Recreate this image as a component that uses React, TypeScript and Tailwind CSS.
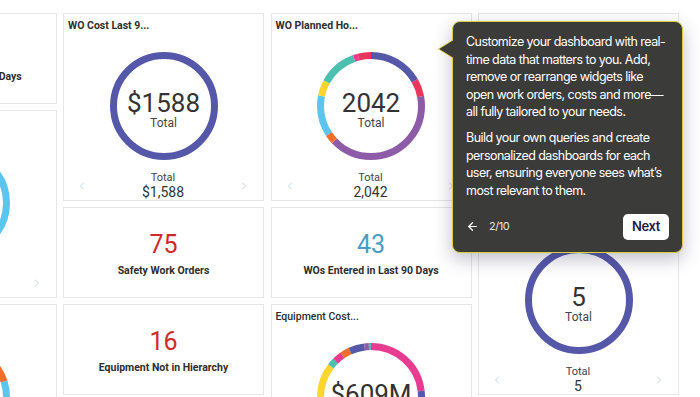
import { ArrowLeft, ChevronLeft, ChevronRight } from "lucide-react";

type Seg = { color: string; from: number; to: number };

const INDIGO = "#5558a8";
const LBLUE = "#5bc4ef";
const PURPLE = "#8e5ba8";
const RED = "#e8365d";
const PINK = "#e73c8f";
const TEAL = "#4dbfb0";
const YELLOW = "#fdd52e";
const ORANGE = "#f36d2b";

// ring drawn with one dashed circle per segment, 0deg = 12 o'clock
function Ring({ segs }: { segs: Seg[] }) {
	const size = 108;
	const stroke = 7;
	const r = (size - stroke) / 2;
	const c = 2 * Math.PI * r;
	return (
		<svg width={size} height={size} viewBox={`0 0 ${size} ${size}`}>
			<g transform={`rotate(-90 ${size / 2} ${size / 2})`}>
				{segs.map((s, i) => (
					<circle
						key={i}
						cx={size / 2}
						cy={size / 2}
						r={r}
						fill="none"
						stroke={s.color}
						strokeWidth={stroke}
						strokeDasharray={`${((s.to - s.from) / 360) * c} ${c}`}
						strokeDashoffset={(-s.from / 360) * c}
					/>
				))}
			</g>
		</svg>
	);
}

interface DonutCardProps {
	title: string;
	value: string;
	total: string;
	segs: Seg[];
	className: string;
	titleClass?: string;
}

function DonutCard({ title, value, total, segs, className, titleClass = "font-bold" }: DonutCardProps) {
	return (
		<div className={`${className} flex flex-col border border-[#e6e6e6] bg-white`}>
			<div className={`px-[4px] pt-[5px] text-[10.5px] leading-[14px] text-[#2e2e2e] ${titleClass}`}>{title}</div>
			<div className="relative mx-auto mt-[19px] h-[108px] w-[108px] shrink-0">
				<Ring segs={segs} />
				<div className="absolute inset-0 flex flex-col items-center pt-[37px]">
					<span className="text-[26px] leading-[28px] text-[#333]">{value}</span>
					<span className="-mt-[1px] text-[12px] leading-[14px] text-[#444]">Total</span>
				</div>
			</div>
			<div className="mt-[12px] flex items-center justify-between pl-[12px] pr-[13px]">
				<ChevronLeft className="h-[12px] w-[12px] text-[#b3c0e4]" strokeWidth={1.5} />
				<div className="flex flex-col items-center">
					<span className="text-[11px] leading-[12px] text-[#444]">Total</span>
					<span className="text-[14px] leading-[16px] text-[#333]">{total}</span>
				</div>
				<ChevronRight className="h-[12px] w-[12px] text-[#b3c0e4]" strokeWidth={1.5} />
			</div>
		</div>
	);
}

function NumberCard({ value, label, valueClass, className }: { value: string; label: string; valueClass: string; className: string }) {
	return (
		<div className={`${className} flex flex-col items-center border border-[#e6e6e6] bg-white pt-[23px]`}>
			<span className={`text-[25px] leading-[28px] ${valueClass}`}>{value}</span>
			<span className="mt-[5px] text-[10.5px] leading-[14px] font-bold text-[#2e2e2e]">{label}</span>
		</div>
	);
}

const plannedSegs: Seg[] = [
	{ color: INDIGO, from: 0, to: 60 },
	{ color: RED, from: 60, to: 79 },
	{ color: PURPLE, from: 79, to: 226 },
	{ color: ORANGE, from: 226, to: 236 },
	{ color: LBLUE, from: 236, to: 281 },
	{ color: YELLOW, from: 281, to: 298 },
	{ color: TEAL, from: 298, to: 340 },
	{ color: PINK, from: 340, to: 345 },
	{ color: RED, from: 345, to: 360 },
];

const equipSegs: Seg[] = [
	{ color: PINK, from: 0, to: 83 },
	{ color: INDIGO, from: 83, to: 130 },
	{ color: PURPLE, from: 130, to: 230 },
	{ color: YELLOW, from: 230, to: 307 },
	{ color: TEAL, from: 307, to: 315 },
	{ color: PINK, from: 315, to: 325 },
	{ color: ORANGE, from: 325, to: 335 },
	{ color: INDIGO, from: 335, to: 352 },
	{ color: PURPLE, from: 352, to: 357 },
	{ color: TEAL, from: 357, to: 360 },
];

export default function App() {
	return (
		<div className="relative h-[397px] w-[700px] overflow-hidden bg-white font-[Roboto]">
			<div className="-ml-[144.5px] grid grid-cols-[repeat(4,201px)] auto-rows-[90.5px] gap-[6.5px] pt-[13px]">
				{/* column 0, mostly scrolled out */}
				<NumberCard
					className="col-start-1 row-start-1"
					value="12"
					label="WOs Closed in Last 90 Days"
					valueClass="text-[#4a9cc6]"
				/>
				<DonutCard
					className="col-start-1 row-start-2 row-span-2"
					title="Open WOs by Type"
					value="18"
					total="18"
					segs={[{ color: LBLUE, from: 0, to: 360 }]}
				/>
				<DonutCard
					className="col-start-1 row-start-4 row-span-2"
					title="WOs by Status"
					value="96"
					total="96"
					segs={[
						{ color: INDIGO, from: 0, to: 50 },
						{ color: ORANGE, from: 50, to: 72 },
						{ color: LBLUE, from: 72, to: 360 },
					]}
				/>

				{/* column 1 */}
				<DonutCard
					className="col-start-2 row-start-1 row-span-2"
					title="WO Cost Last 9..."
					value="$1588"
					total="$1,588"
					segs={[{ color: INDIGO, from: 0, to: 360 }]}
				/>
				<NumberCard className="col-start-2 row-start-3" value="75" label="Safety Work Orders" valueClass="text-[#cf2a2a]" />
				<NumberCard className="col-start-2 row-start-4" value="16" label="Equipment Not in Hierarchy" valueClass="text-[#cf2a2a]" />

				{/* column 2 */}
				<DonutCard
					className="col-start-3 row-start-1 row-span-2"
					title="WO Planned Ho..."
					value="2042"
					total="2,042"
					segs={plannedSegs}
				/>
				<NumberCard className="col-start-3 row-start-3" value="43" label="WOs Entered in Last 90 Days" valueClass="text-[#4a9cc6]" />
				<DonutCard
					className="col-start-3 row-start-4 row-span-2"
					title="Equipment Cost..."
					titleClass="font-medium"
					value="$609M"
					total="$609M"
					segs={equipSegs}
				/>

				{/* column 3 */}
				<DonutCard
					className="col-start-4 row-start-1 row-span-2"
					title="Open WOs"
					value="31"
					total="31"
					segs={[{ color: INDIGO, from: 0, to: 360 }]}
				/>
				<DonutCard
					className="col-start-4 row-start-3 row-span-2"
					title="Overdue PMs"
					value="5"
					total="5"
					segs={[{ color: INDIGO, from: 0, to: 360 }]}
				/>
			</div>

			{/* onboarding tour popover */}
			<div className="absolute left-[452px] top-[21px] w-[231px] rounded-[8px] border border-[#d9cf3a] bg-[#3b3b39] px-[13px] pb-[12px] pt-[11px] font-[Inter] text-white shadow-[0_6px_18px_rgba(40,40,80,0.3)]">
				<svg className="absolute -left-[16px] top-[17px]" width="16" height="20" viewBox="0 0 16 20">
					<path d="M16 1 L1.5 10 L16 19" fill="#3b3b39" stroke="#d9cf3a" strokeWidth="1" />
				</svg>
				<p className="text-[12.5px] leading-[17.5px] tracking-[-0.55px]">
					Customize your dashboard with real-time data that matters to you. Add, remove or rearrange widgets like open work orders, costs and more—all fully tailored to your needs.
				</p>
				<p className="mt-[8.5px] text-[12.5px] leading-[17.5px] tracking-[-0.55px]">
					Build your own queries and create personalized dashboards for each user, ensuring everyone sees what’s most relevant to them.
				</p>
				<div className="mt-[14.5px] flex items-center">
					<ArrowLeft className="h-[13px] w-[13px]" strokeWidth={2.2} />
					<span className="ml-[10px] text-[11px] tracking-[-0.5px] text-[#e6e6e6]">2/10</span>
					<button className="ml-auto h-[26px] rounded-[5px] bg-white px-[9px] text-[13px] font-semibold tracking-[-0.4px] text-[#1c1c4a]">
						Next
					</button>
				</div>
			</div>
		</div>
	);
}
